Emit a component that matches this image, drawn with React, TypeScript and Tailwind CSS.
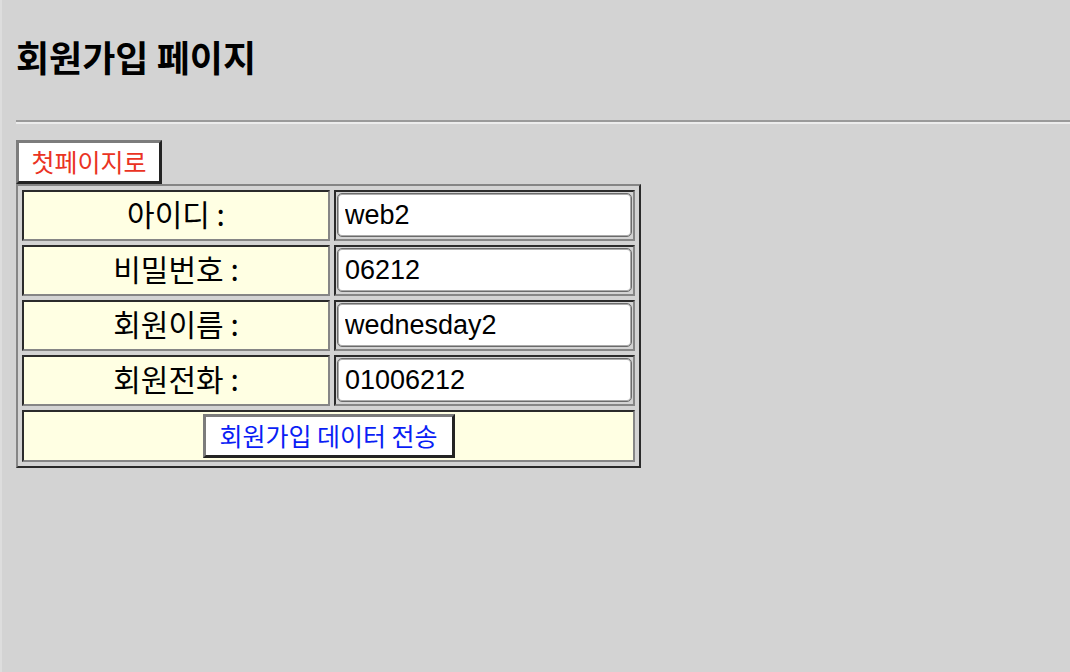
import React from 'react';

const fields = [
  { label: '아이디 :', value: 'web2' },
  { label: '비밀번호 :', value: '06212' },
  { label: '회원이름 :', value: 'wednesday2' },
  { label: '회원전화 :', value: '01006212' },
];

const outset = 'border-[3px] border-t-[#7c7c7c] border-l-[#7c7c7c] border-b-[#232323] border-r-[#232323]';
const inset = 'border-2 border-t-[#2b2b2b] border-l-[#2b2b2b] border-b-[#868686] border-r-[#868686]';

export default function App() {
  return (
    <div className="min-h-screen bg-[#d3d3d3] border-l-2 border-[#dddddd] font-['Noto_Sans_CJK_KR',sans-serif] text-black">
      <div className="pl-[14px] pt-[34px]">
        {/* 제목 */}
        <h2 className="h-[44px] flex items-center text-[36px] font-bold leading-none">
          회원가입 페이지
        </h2>

        <div className="mt-[42px] h-[4px] border-t-2 border-b-2 border-t-[#9a9a9a] border-b-[#ececec]" />

        <button
          className={`mt-[16px] w-[146px] h-[44px] bg-white ${outset} text-[#ea3323] text-[25px] leading-none flex items-center justify-center pb-[2px]`}
        >
          첫페이지로
        </button>

        <div className="w-[625px] border-2 border-t-[#858585] border-l-[#858585] border-b-[#2a2a2a] border-r-[#2a2a2a] p-[4px] grid grid-cols-[308px_301px] gap-[4px]">
          {fields.map((f) => (
            <React.Fragment key={f.label}>
              <div className={`h-[51px] ${inset} bg-[#ffffe3] flex items-center justify-center text-[30px] leading-none pb-[6px]`}>
                {f.label}
              </div>
              <div className={`h-[51px] ${inset} pl-[1px] pr-[1px] pt-[1px] pb-[2px]`}>
                <input
                  readOnly
                  value={f.value}
                  className="w-full h-[44px] bg-white rounded-[5px] border border-[#6b6b6b] shadow-[inset_0_0_0_1px_#ababab] pl-[7px] text-[27px] font-['Liberation_Sans',sans-serif] outline-none"
                />
              </div>
            </React.Fragment>
          ))}
          <div className={`col-span-2 h-[52px] ${inset} bg-[#ffffe3] flex items-center justify-center`}>
            <button
              className={`w-[252px] h-[44px] bg-white ${outset} text-[#0a1ef5] text-[25px] leading-none flex items-center justify-center pb-[2px]`}
            >
              회원가입 데이터 전송
            </button>
          </div>
        </div>
      </div>
    </div>
  );
}
